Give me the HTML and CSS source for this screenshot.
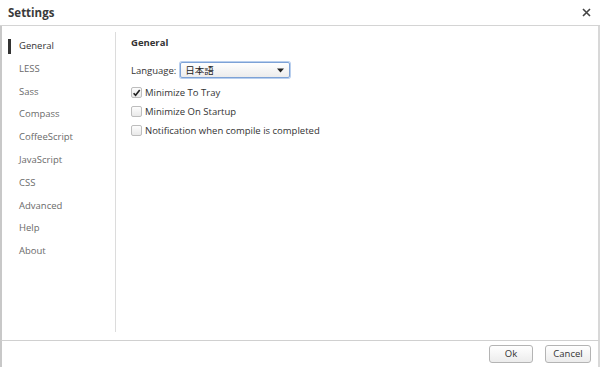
FILE: index.html
```html
<!DOCTYPE html>
<html>
<head>
<meta charset="utf-8">
<link rel="stylesheet" href="styles.css">
</head>
<body>
<div class="window">
  <div class="titlebar">
    <span class="title">Settings</span>
    <span class="close">
      <svg width="9" height="9" viewBox="0 0 9 9"><path d="M1 1L8 8M8 1L1 8" stroke="#444" stroke-width="1.6" fill="none"/></svg>
    </span>
  </div>
  <div class="main">
    <nav class="sidebar">
      <div class="nav-item active">General</div>
      <div class="nav-item">LESS</div>
      <div class="nav-item">Sass</div>
      <div class="nav-item">Compass</div>
      <div class="nav-item">CoffeeScript</div>
      <div class="nav-item">JavaScript</div>
      <div class="nav-item">CSS</div>
      <div class="nav-item">Advanced</div>
      <div class="nav-item">Help</div>
      <div class="nav-item">About</div>
    </nav>
    <section class="content">
      <h2 class="heading">General</h2>
      <div class="lang-row">
        <span class="label">Language:</span>
        <div class="select">
          <span class="select-text">日本語</span>
          <svg class="arrow" width="7" height="5" viewBox="0 0 7 5"><path d="M0 0.5H7L3.5 4.5Z" fill="#222"/></svg>
        </div>
      </div>
      <div class="check-row">
        <span class="box checked"><svg width="10" height="10" viewBox="0 0 10 10"><path d="M1.8 5.2L4 7.6L8.6 1.6" stroke="#222" stroke-width="1.8" fill="none"/></svg></span>
        <span class="check-label">Minimize To Tray</span>
      </div>
      <div class="check-row">
        <span class="box"></span>
        <span class="check-label">Minimize On Startup</span>
      </div>
      <div class="check-row">
        <span class="box"></span>
        <span class="check-label">Notification when compile is completed</span>
      </div>
    </section>
  </div>
  <div class="footer">
    <button class="btn ok">Ok</button>
    <button class="btn cancel">Cancel</button>
  </div>
</div>
</body>
</html>
```
FILE: styles.css
```css
* { box-sizing: border-box; }
html, body { margin: 0; padding: 0; background: #fff; }
body {
  width: 600px;
  height: 367px;
  overflow: hidden;
  font-family: "Lucida Grande", "Open Sans", "Noto Sans CJK JP", sans-serif;
  font-size: 9.5px;
  color: #444;
}
.window {
  width: 600px;
  height: 367px;
  display: flex;
  flex-direction: column;
}
.titlebar {
  height: 26px;
  flex: none;
  border-bottom: 1px solid #d4d4d4;
  display: flex;
  align-items: center;
  justify-content: space-between;
  padding: 0 9px 1px 8px;
}
.title {
  font-weight: bold;
  font-size: 11.5px;
  color: #3a3a3a;
}
.close { display: flex; margin-top: 1px; }
.main {
  flex: 1;
  display: flex;
  border-left: 2px solid #c8c8c8;
  border-right: 2px solid #d8d8d8;
  padding: 6px 0 8px;
}
.sidebar {
  width: 114px;
  flex: none;
  border-right: 1px solid #dcdcdc;
  padding-top: 3px;
}
.nav-item {
  height: 22.8px;
  line-height: 22.8px;
  padding-left: 17px;
  color: #6a6a6a;
  position: relative;
}
.nav-item.active { color: #333; }
.nav-item.active::before {
  content: "";
  position: absolute;
  left: 6px;
  top: 4px;
  width: 3px;
  height: 15px;
  background: #333;
}
.content {
  flex: 1;
  padding: 3px 0 0 15px;
}
.heading {
  margin: 0;
  font-size: 9.5px;
  font-weight: bold;
  color: #333;
  height: 16px;
  line-height: 16px;
}
.lang-row {
  display: flex;
  align-items: center;
  margin-top: 10px;
  height: 18px;
}
.label { color: #333; margin-right: 4px; }
.select {
  width: 110px;
  height: 16px;
  border: 1px solid #7da2d6;
  border-radius: 2px;
  box-shadow: 0 0 0 1px #b9cfee;
  background: linear-gradient(#ffffff, #ececec);
  display: flex;
  align-items: center;
  justify-content: space-between;
  padding: 0 5px 0 4px;
}
.select-text { color: #222; font-size: 9.5px; }
.arrow { display: block; }
.check-row {
  display: flex;
  align-items: center;
  height: 19px;
}
.lang-row + .check-row { margin-top: 4px; }
.box {
  width: 11px;
  height: 11px;
  border: 1px solid #bdbdbd;
  border-radius: 2px;
  background: linear-gradient(#fdfdfd, #e9e9e9);
  margin-right: 3px;
  display: flex;
  align-items: center;
  justify-content: center;
  flex: none;
}
.check-label { color: #333; }
.footer {
  height: 27px;
  flex: none;
  border-top: 1px solid #d0d0d0;
  border-left: 2px solid #c8c8c8;
  border-right: 2px solid #d8d8d8;
  display: flex;
  justify-content: flex-end;
  align-items: center;
  gap: 12px;
  padding: 0 7px 0 0;
}
.btn {
  font-family: inherit;
  font-size: 9.5px;
  color: #333;
  height: 18px;
  border: 1px solid #b4b4b4;
  border-radius: 3px;
  background: linear-gradient(#ffffff, #ececec);
  padding: 0;
  line-height: 16px;
}
.ok { width: 44px; }
.cancel { width: 46px; }
```
